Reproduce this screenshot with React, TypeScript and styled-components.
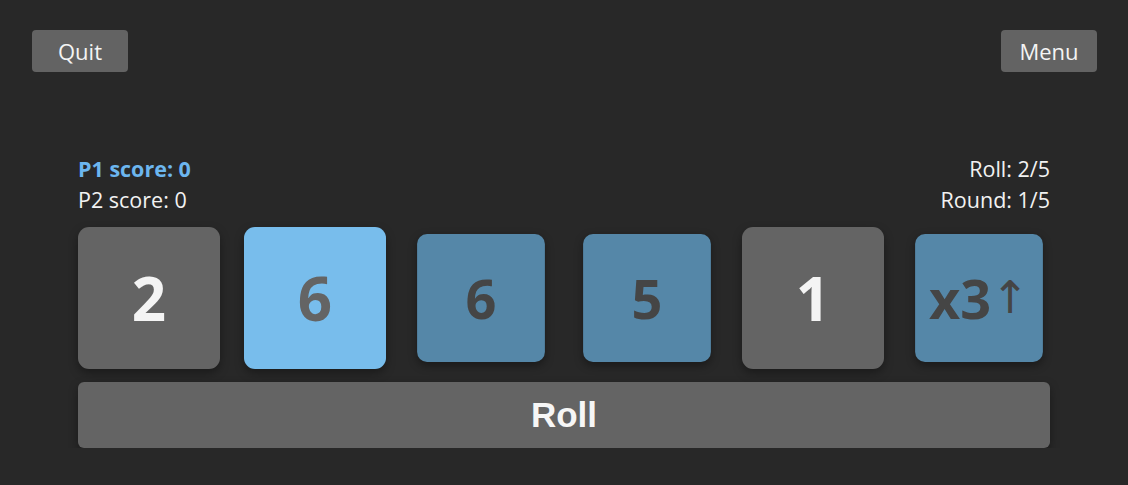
import React from "react";
import styled, { createGlobalStyle } from "styled-components";

const GlobalStyle = createGlobalStyle`
  html, body {
    margin: 0;
    padding: 0;
    background: #282828;
  }
  body {
    font-family: "Open Sans", "Noto Sans", sans-serif;
    color: #f2f2f2;
  }
`;

const Page = styled.div`
  display: flex;
  flex-direction: column;
  padding: 30px 31px 0 32px;
`;

const TopBar = styled.div`
  display: flex;
  justify-content: space-between;
  align-items: center;
`;

const TopButton = styled.button`
  width: 96px;
  height: 42px;
  border: none;
  border-radius: 4px;
  background: #636363;
  color: #f4f4f4;
  font-family: "Open Sans", "Noto Sans", sans-serif;
  font-size: 22px;
  padding: 0;
  cursor: pointer;
`;

const Board = styled.div`
  display: flex;
  flex-direction: column;
  margin: 81px 47px 0 46px;
`;

const StatusRow = styled.div`
  display: flex;
  justify-content: space-between;
  font-size: 21.5px;
  line-height: 31px;
`;

const StatusColumn = styled.div<{ $align?: "left" | "right" }>`
  display: flex;
  flex-direction: column;
  text-align: ${(p) => p.$align ?? "left"};
`;

const StatusLine = styled.span<{ $active?: boolean }>`
  color: ${(p) => (p.$active ? "#6cb6ef" : "#f2f2f2")};
  font-weight: ${(p) => (p.$active ? 700 : 400)};
`;

const DiceRow = styled.div`
  display: flex;
  justify-content: space-between;
  margin-top: 12px;
`;

type DieKind = "idle" | "selected" | "kept";

const dieBg: Record<DieKind, string> = {
  idle: "#646464",
  selected: "#78bdec",
  kept: "#5587a8",
};
const dieFg: Record<DieKind, string> = {
  idle: "#f4f4f4",
  selected: "#646464",
  kept: "#454545",
};

const Die = styled.div<{ $kind: DieKind }>`
  width: 142px;
  height: 142px;
  border-radius: 11px;
  display: flex;
  align-items: center;
  justify-content: center;
  background: ${(p) => dieBg[p.$kind]};
  color: ${(p) => dieFg[p.$kind]};
  font-size: 60px;
  font-weight: 700;
  box-shadow: 0 4px 10px rgba(0, 0, 0, 0.35);
  transform: ${(p) => (p.$kind === "kept" ? "scale(0.9)" : "none")};
  user-select: none;
`;

const Arrow = styled.span`
  font-weight: 400;
  font-family: "DejaVu Sans", sans-serif;
  font-size: 50px;
`;

const RollButton = styled.button`
  margin-top: 13px;
  height: 66px;
  width: 100%;
  border: none;
  border-radius: 6px;
  background: #646464;
  color: #f6f6f6;
  font-family: "Liberation Sans", Arial, sans-serif;
  font-weight: 700;
  font-size: 35px;
  box-shadow: 0 4px 10px rgba(0, 0, 0, 0.35);
  cursor: pointer;
`;

export default function App() {
  const dice: { value: React.ReactNode; kind: DieKind }[] = [
    { value: "2", kind: "idle" },
    { value: "6", kind: "selected" },
    { value: "6", kind: "kept" },
    { value: "5", kind: "kept" },
    { value: "1", kind: "idle" },
    {
      value: (
        <>
          x3<Arrow>↑</Arrow>
        </>
      ),
      kind: "kept",
    },
  ];
  return (
    <>
      <GlobalStyle />
      <Page>
        <TopBar>
          <TopButton>Quit</TopButton>
          <TopButton>Menu</TopButton>
        </TopBar>
        <Board>
          <StatusRow>
            <StatusColumn>
              <StatusLine $active>P1 score: 0</StatusLine>
              <StatusLine>P2 score: 0</StatusLine>
            </StatusColumn>
            <StatusColumn $align="right">
              <StatusLine>Roll: 2/5</StatusLine>
              <StatusLine>Round: 1/5</StatusLine>
            </StatusColumn>
          </StatusRow>
          <DiceRow>
            {dice.map((d, i) => (
              <Die key={i} $kind={d.kind}>
                {d.value}
              </Die>
            ))}
          </DiceRow>
          <RollButton>Roll</RollButton>
        </Board>
      </Page>
    </>
  );
}
